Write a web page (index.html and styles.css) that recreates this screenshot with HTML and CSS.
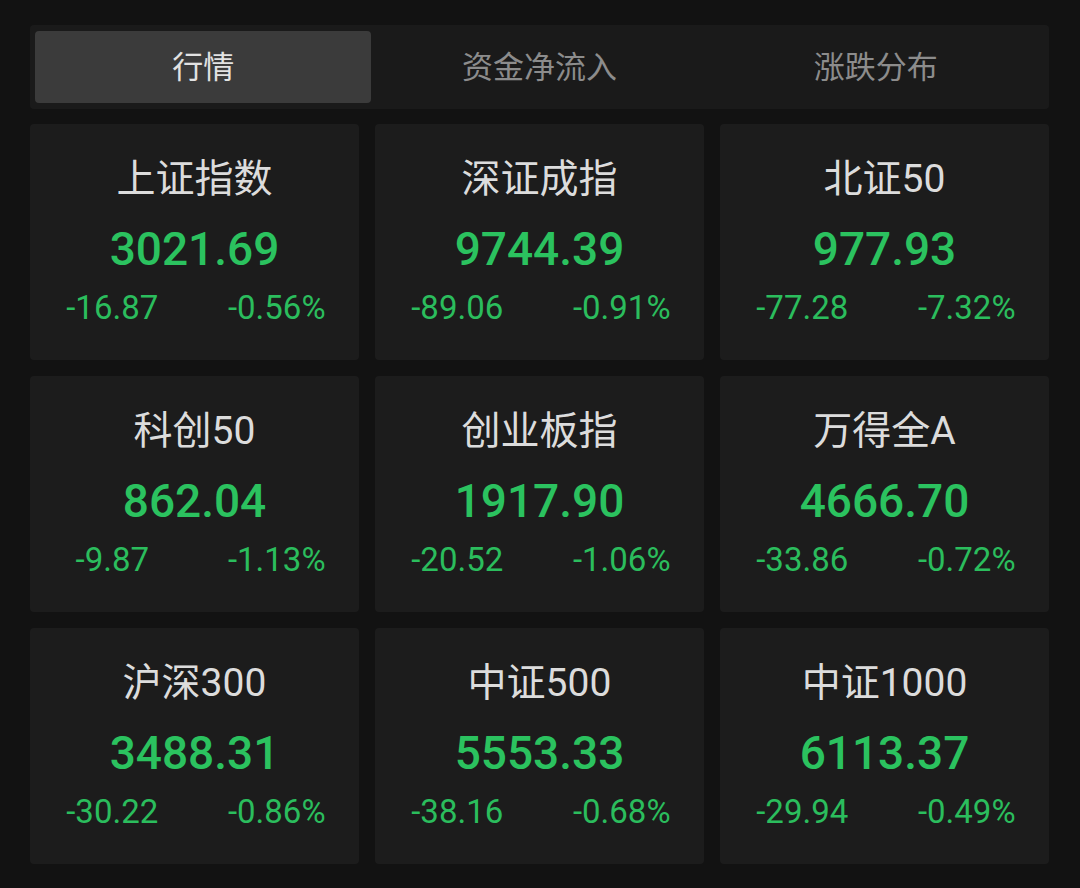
FILE: index.html
```html
<!DOCTYPE html>
<html lang="zh-CN">
<head>
<meta charset="utf-8">
<link rel="stylesheet" href="styles.css">
</head>
<body>
<div class="page">
  <div class="tabs">
    <div class="tab active">行情</div>
    <div class="tab">资金净流入</div>
    <div class="tab">涨跌分布</div>
  </div>
  <div class="grid">
    <div class="card"><div class="name">上证指数</div><div class="price">3021.69</div><div class="chg"><span>-16.87</span><span>-0.56%</span></div></div>
    <div class="card"><div class="name">深证成指</div><div class="price">9744.39</div><div class="chg"><span>-89.06</span><span>-0.91%</span></div></div>
    <div class="card"><div class="name">北证50</div><div class="price">977.93</div><div class="chg"><span>-77.28</span><span>-7.32%</span></div></div>
    <div class="card"><div class="name">科创50</div><div class="price">862.04</div><div class="chg"><span>-9.87</span><span>-1.13%</span></div></div>
    <div class="card"><div class="name">创业板指</div><div class="price">1917.90</div><div class="chg"><span>-20.52</span><span>-1.06%</span></div></div>
    <div class="card"><div class="name">万得全A</div><div class="price">4666.70</div><div class="chg"><span>-33.86</span><span>-0.72%</span></div></div>
    <div class="card"><div class="name">沪深300</div><div class="price">3488.31</div><div class="chg"><span>-30.22</span><span>-0.86%</span></div></div>
    <div class="card"><div class="name">中证500</div><div class="price">5553.33</div><div class="chg"><span>-38.16</span><span>-0.68%</span></div></div>
    <div class="card"><div class="name">中证1000</div><div class="price">6113.37</div><div class="chg"><span>-29.94</span><span>-0.49%</span></div></div>
  </div>
</div>
</body>
</html>
```
FILE: styles.css
```css
* { box-sizing: border-box; }
html, body { margin: 0; padding: 0; }
body {
  background: #121212;
  width: 1080px;
  height: 888px;
  overflow: hidden;
  font-family: Roboto, "Noto Sans CJK SC", sans-serif;
}
.page {
  padding: 25px 31px 0 30px;
  display: flex;
  flex-direction: column;
  gap: 15px;
}
.tabs {
  height: 84px;
  background: #1a1a1a;
  border-radius: 4px;
  padding: 6px 5px;
  display: grid;
  grid-template-columns: repeat(3, 1fr);
}
.tab {
  display: flex;
  align-items: center;
  justify-content: center;
  font-size: 31px;
  color: #8c8c8c;
  border-radius: 4px;
  padding-bottom: 5px;
  font-family: "Noto Sans CJK SC", sans-serif;
}
.tab.active {
  background: #3b3b3b;
  color: #e2e2e2;
}
.grid {
  display: grid;
  grid-template-columns: repeat(3, 1fr);
  grid-auto-rows: 236px;
  gap: 16px 16px;
}
.card {
  background: #1c1c1c;
  border-radius: 4px;
  display: flex;
  flex-direction: column;
  align-items: center;
  padding-top: 30px;
}
.name {
  font-size: 39px;
  line-height: 50px;
  color: #dcdcdc;
  font-weight: 400;
  font-family: Roboto, "Noto Sans CJK SC", sans-serif;
}
.price {
  margin-top: 18px;
  font-size: 46px;
  line-height: 54px;
  font-weight: 500;
  color: #2bc25f;
}
.chg {
  margin-top: 12px;
  width: 100%;
  display: grid;
  grid-template-columns: 1fr 1fr;
  font-size: 33px;
  line-height: 40px;
  color: #2bbd5d;
}
.chg span { text-align: center; }
```
